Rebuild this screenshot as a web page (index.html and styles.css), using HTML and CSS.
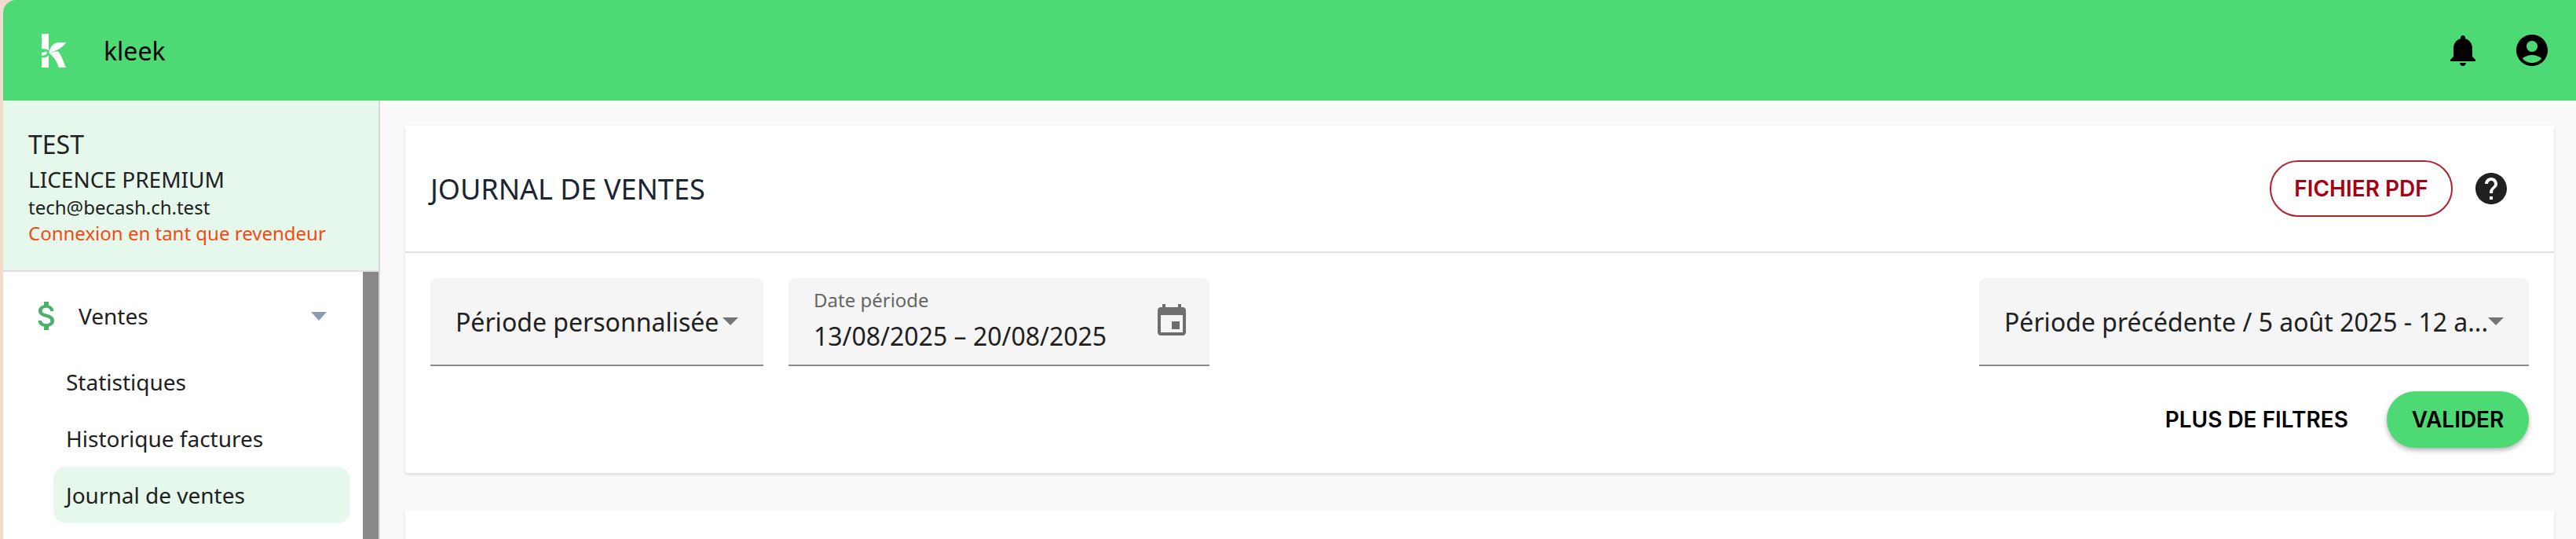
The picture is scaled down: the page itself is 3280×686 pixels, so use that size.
FILE: index.html
```html
<!DOCTYPE html>
<html lang="fr">
<head>
    <meta charset="UTF-8">
    <meta name="viewport" content="width=device-width, initial-scale=1.0">
    <title>Kleek - Journal de ventes</title>
    <link rel="stylesheet" href="styles.css">
</head>
<body>
    <div class="app">
        <header class="topbar">
            <svg class="logo" viewBox="0 0 31 43">
                <path fill="#fff" d="M0 0H9V21Q6 19 0 19Z"/>
                <path fill="#fff" d="M0 24Q4 24 6 22L7 25Q4 28 0 28Z"/>
                <path fill="#fff" d="M0 30Q6 31 9 27V43H0Z"/>
                <path fill="#fff" d="M9 25Q12 11 22 11H31Q27 17 21 20Q14 23 9 25Z"/>
                <path fill="#fff" d="M10 25Q18 21 22 23Q26 30 31 43H22Q18 31 10 25Z"/>
            </svg>
            <span class="brand">kleek</span>
            <div class="topbar-icons">
                <svg class="icon" viewBox="0 0 24 24"><path d="M12 22c1.1 0 2-.9 2-2h-4c0 1.1.89 2 2 2zm6-6v-5c0-3.07-1.64-5.64-4.5-6.32V4c0-.83-.67-1.5-1.5-1.5s-1.5.67-1.5 1.5v.68C7.63 5.36 6 7.92 6 11v5l-2 2v1h16v-1l-2-2z"/></svg>
                <svg class="icon" viewBox="0 0 24 24"><path d="M12 2C6.48 2 2 6.48 2 12s4.48 10 10 10 10-4.48 10-10S17.52 2 12 2zm0 4c1.93 0 3.5 1.57 3.5 3.5S13.93 13 12 13s-3.5-1.57-3.5-3.5S10.07 6 12 6zm0 14c-2.03 0-4.43-.82-6.14-2.88C7.55 15.8 9.68 15 12 15s4.45.8 6.14 2.12C16.43 19.18 14.03 20 12 20z"/></svg>
            </div>
        </header>

        <div class="main">
            <aside class="sidebar">
                <div class="profile">
                    <div class="profile-name">TEST</div>
                    <div class="profile-licence">LICENCE PREMIUM</div>
                    <div class="profile-mail">tech@becash.ch.test</div>
                    <div class="profile-reseller">Connexion en tant que revendeur</div>
                </div>
                <div class="menu-wrap">
                    <nav class="menu">
                        <div class="menu-group">
                            <svg class="icon icon-money" viewBox="0 0 24 24"><path d="M11.8 10.9c-2.27-.59-3-1.2-3-2.15 0-1.09 1.01-1.85 2.7-1.85 1.78 0 2.44.85 2.5 2.1h2.21c-.07-1.72-1.12-3.3-3.21-3.81V3h-3v2.16c-1.94.42-3.5 1.68-3.5 3.61 0 2.31 1.91 3.46 4.7 4.13 2.5.6 3 1.48 3 2.41 0 .69-.49 1.79-2.7 1.79-2.06 0-2.87-.92-2.98-2.1h-2.2c.12 2.19 1.76 3.42 3.68 3.83V21h3v-2.15c1.95-.37 3.5-1.5 3.5-3.55 0-2.84-2.43-3.81-4.7-4.4z"/></svg>
                            <span class="menu-group-label">Ventes</span>
                            <span class="menu-caret"></span>
                        </div>
                        <a class="menu-item">Statistiques</a>
                        <a class="menu-item">Historique factures</a>
                        <a class="menu-item active">Journal de ventes</a>
                    </nav>
                    <div class="scrollbar"></div>
                </div>
            </aside>

            <main class="content">
                <section class="card">
                    <div class="card-head">
                        <h1>JOURNAL DE VENTES</h1>
                        <button class="btn btn-pdf">FICHIER PDF</button>
                        <svg class="icon icon-help" viewBox="0 0 24 24"><path d="M12 2C6.48 2 2 6.48 2 12s4.48 10 10 10 10-4.48 10-10S17.52 2 12 2zm1 17h-2v-2h2v2zm2.07-7.75l-.9.92C13.45 12.9 13 13.5 13 15h-2v-.5c0-1.1.45-2.1 1.17-2.83l1.24-1.26c.37-.36.59-.86.59-1.41 0-1.1-.9-2-2-2s-2 .9-2 2H8c0-2.21 1.79-4 4-4s4 1.79 4 4c0 .88-.36 1.68-.93 2.25z"/></svg>
                    </div>
                    <div class="filters">
                        <div class="filter-row">
                            <div class="field field-period">
                                <span class="field-value">Période personnalisée</span>
                                <span class="select-caret"></span>
                            </div>
                            <div class="field field-date">
                                <div class="field-stack">
                                    <span class="field-label">Date période</span>
                                    <span class="field-value">13/08/2025 – 20/08/2025</span>
                                </div>
                                <svg class="icon icon-calendar" viewBox="0 0 24 24"><path d="M17 12h-5v5h5v-5zM16 1v2H8V1H6v2H5c-1.11 0-1.99.9-1.99 2L3 19c0 1.1.89 2 2 2h14c1.1 0 2-.9 2-2V5c0-1.1-.9-2-2-2h-1V1h-2zm3 18H5V8h14v11z"/></svg>
                            </div>
                            <div class="field field-compare">
                                <span class="field-value">Période précédente / 5 août 2025 - 12 a...</span>
                                <span class="select-caret"></span>
                            </div>
                        </div>
                        <div class="actions">
                            <button class="btn btn-more">PLUS DE FILTRES</button>
                            <button class="btn btn-submit">VALIDER</button>
                        </div>
                    </div>
                </section>
                <section class="card card-next"></section>
            </main>
        </div>
    </div>
</body>
</html>
```
FILE: styles.css
```css
html, body {
    margin: 0;
    padding: 0;
    height: 100%;
    overflow: hidden;
}

body {
    background-color: #efdccd;
    font-family: 'Noto Sans', sans-serif;
    color: #212121;
}

.app {
    margin-left: 4px;
    height: 686px;
    display: flex;
    flex-direction: column;
    border-top-left-radius: 16px;
    overflow: hidden;
    background-color: #f9f9f9;
}

.topbar {
    height: 128px;
    flex: none;
    background-color: #4dd973;
    display: flex;
    align-items: center;
    padding: 0 32px 0 49px;
}

.logo {
    width: 31px;
    height: 43px;
    margin-right: 48px;
}

.brand {
    font-size: 32px;
    color: #000;
}

.topbar-icons {
    margin-left: auto;
    display: flex;
    gap: 40px;
}

.icon {
    width: 48px;
    height: 48px;
    display: block;
    flex: none;
}

.main {
    flex: 1;
    display: flex;
    min-height: 0;
}

.sidebar {
    width: 478px;
    flex: none;
    display: flex;
    flex-direction: column;
    background-color: #fff;
    border-right: 2px solid #d9d9d9;
}

.profile {
    height: 218px;
    flex: none;
    box-sizing: border-box;
    padding-top: 32px;
    padding-left: 32px;
    background-color: #e6f8eb;
    border-bottom: 2px solid #e0e0e0;
}

.profile-name {
    font-size: 32px;
    line-height: 48px;
}

.profile-licence {
    font-size: 28px;
    line-height: 40px;
}

.profile-mail {
    font-size: 24px;
    line-height: 32px;
}

.profile-reseller {
    font-size: 24px;
    line-height: 34px;
    color: #f44a14;
}

.menu-wrap {
    flex: 1;
    display: flex;
    min-height: 0;
}

.menu {
    flex: 1;
    padding-top: 32px;
}

.scrollbar {
    width: 20px;
    flex: none;
    background-color: #888;
}

.menu-group {
    display: flex;
    align-items: center;
    height: 48px;
    padding-left: 32px;
    margin-bottom: 24px;
}

.icon-money {
    fill: #4caf68;
}

.menu-group-label {
    font-size: 28px;
    margin-left: 16px;
}

.menu-caret {
    margin-left: auto;
    margin-right: 46px;
    width: 0;
    height: 0;
    border-left: 10px solid transparent;
    border-right: 10px solid transparent;
    border-top: 11px solid #8a9ab5;
}

.menu-item {
    display: block;
    height: 72px;
    line-height: 72px;
    margin: 0 16px 0 64px;
    padding-left: 16px;
    border-radius: 16px;
    font-size: 28px;
}

.menu-item.active {
    background-color: #e6f8eb;
}

.content {
    flex: 1;
    min-width: 0;
    padding: 32px 28px 0 32px;
}

.card {
    background-color: #fff;
    box-shadow: 0 2px 4px rgba(0, 0, 0, 0.12);
}

.card-head {
    height: 162px;
    box-sizing: border-box;
    display: flex;
    align-items: center;
    padding: 0 56px 0 32px;
    border-bottom: 2px solid #e0e0e0;
}

h1 {
    margin: 0 auto 0 0;
    font-size: 36px;
    font-weight: 400;
    color: #1a2433;
}

.btn {
    height: 72px;
    box-sizing: border-box;
    font-family: Inter, sans-serif;
    font-size: 28px;
    font-weight: 600;
    border: none;
    background: none;
    padding: 0;
    color: #000;
}

.btn-pdf {
    width: 233px;
    border: 2px solid #b3212f;
    border-radius: 36px;
    color: #a80012;
    background-color: #fff;
}

.icon-help {
    margin-left: 25px;
    fill: #212121;
}

.filters {
    padding: 32px;
}

.filter-row {
    display: flex;
    gap: 32px;
}

.field {
    height: 112px;
    box-sizing: border-box;
    display: flex;
    align-items: center;
    background-color: #f5f5f5;
    border-bottom: 2px solid #8c8c8c;
    border-radius: 8px 8px 0 0;
    padding: 0 32px;
}

.field-period {
    width: 424px;
}

.field-date {
    width: 536px;
    padding-right: 24px;
}

.field-compare {
    width: 700px;
    margin-left: auto;
}

.field-value {
    font-size: 32px;
    white-space: nowrap;
}

.field-stack {
    display: flex;
    flex-direction: column;
    gap: 8px;
    flex: 1;
    padding-bottom: 5px;
}

.field-label {
    font-size: 24px;
    color: #666;
}

.select-caret {
    margin-left: auto;
    width: 0;
    height: 0;
    border-left: 10px solid transparent;
    border-right: 10px solid transparent;
    border-top: 10px solid #757575;
}

.icon-calendar {
    fill: #6e6e6e;
}

.actions {
    display: flex;
    justify-content: flex-end;
    align-items: center;
    margin-top: 32px;
}

.btn-more {
    margin-right: 49px;
}

.btn-submit {
    width: 181px;
    border-radius: 36px;
    background-color: #4dd973;
    box-shadow: 0 3px 6px rgba(0, 0, 0, 0.3);
}

.card-next {
    height: 60px;
    margin-top: 48px;
}
```
